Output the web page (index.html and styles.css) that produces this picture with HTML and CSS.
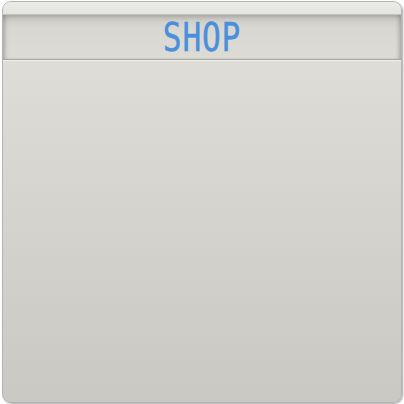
FILE: index.html
```html
<!DOCTYPE html>
<html>
<head>
<meta charset="utf-8">
<link rel="stylesheet" href="styles.css">
</head>
<body>
<div class="panel">
  <div class="cap"></div>
  <div class="header"><span class="title">SHOP</span></div>
  <div class="content"></div>
</div>
</body>
</html>
```
FILE: styles.css
```css
html, body { margin: 0; padding: 0; background: #ffffff; }
body { width: 404px; height: 404px; overflow: hidden; }
.panel {
  box-sizing: border-box;
  margin: 1px 0 0 2px;
  width: 400px;
  height: 402px;
  border: 1px solid #b4b4b0;
  border-radius: 9px;
  background: linear-gradient(#e3e3df, #dcdbd5 20%, #c9c8c2);
  box-shadow: 1px 1px 2px rgba(0,0,0,0.35);
  display: flex;
  flex-direction: column;
  overflow: hidden;
}
.cap { height: 12px; background: linear-gradient(#ebebe8, #e3e3df); flex: none; }
.header {
  flex: none;
  height: 44px;
  border-top: 1px solid #c4c4bf;
  border-bottom: 1px solid #a6a6a1;
  background: linear-gradient(#c9c8c2, #d8d7d1 30%, #dcdbd6);
  box-shadow: inset 0 3px 4px rgba(0,0,0,0.12), inset 4px 0 4px -2px rgba(0,0,0,0.18), inset -4px 0 4px -2px rgba(0,0,0,0.18);
  display: flex;
  justify-content: center;
  align-items: center;
}
.title {
  font-family: "DejaVu Sans Mono", monospace;
  font-size: 39px;
  color: #4a8fdc;
  letter-spacing: 1px;
  transform: scaleX(0.8);
  display: inline-block;
  line-height: 1;
  padding-top: 1px;
  -webkit-text-stroke: 0.4px #4a8fdc;
}
.content { flex: 1; border-top: 1px solid #efefeb; }
```
